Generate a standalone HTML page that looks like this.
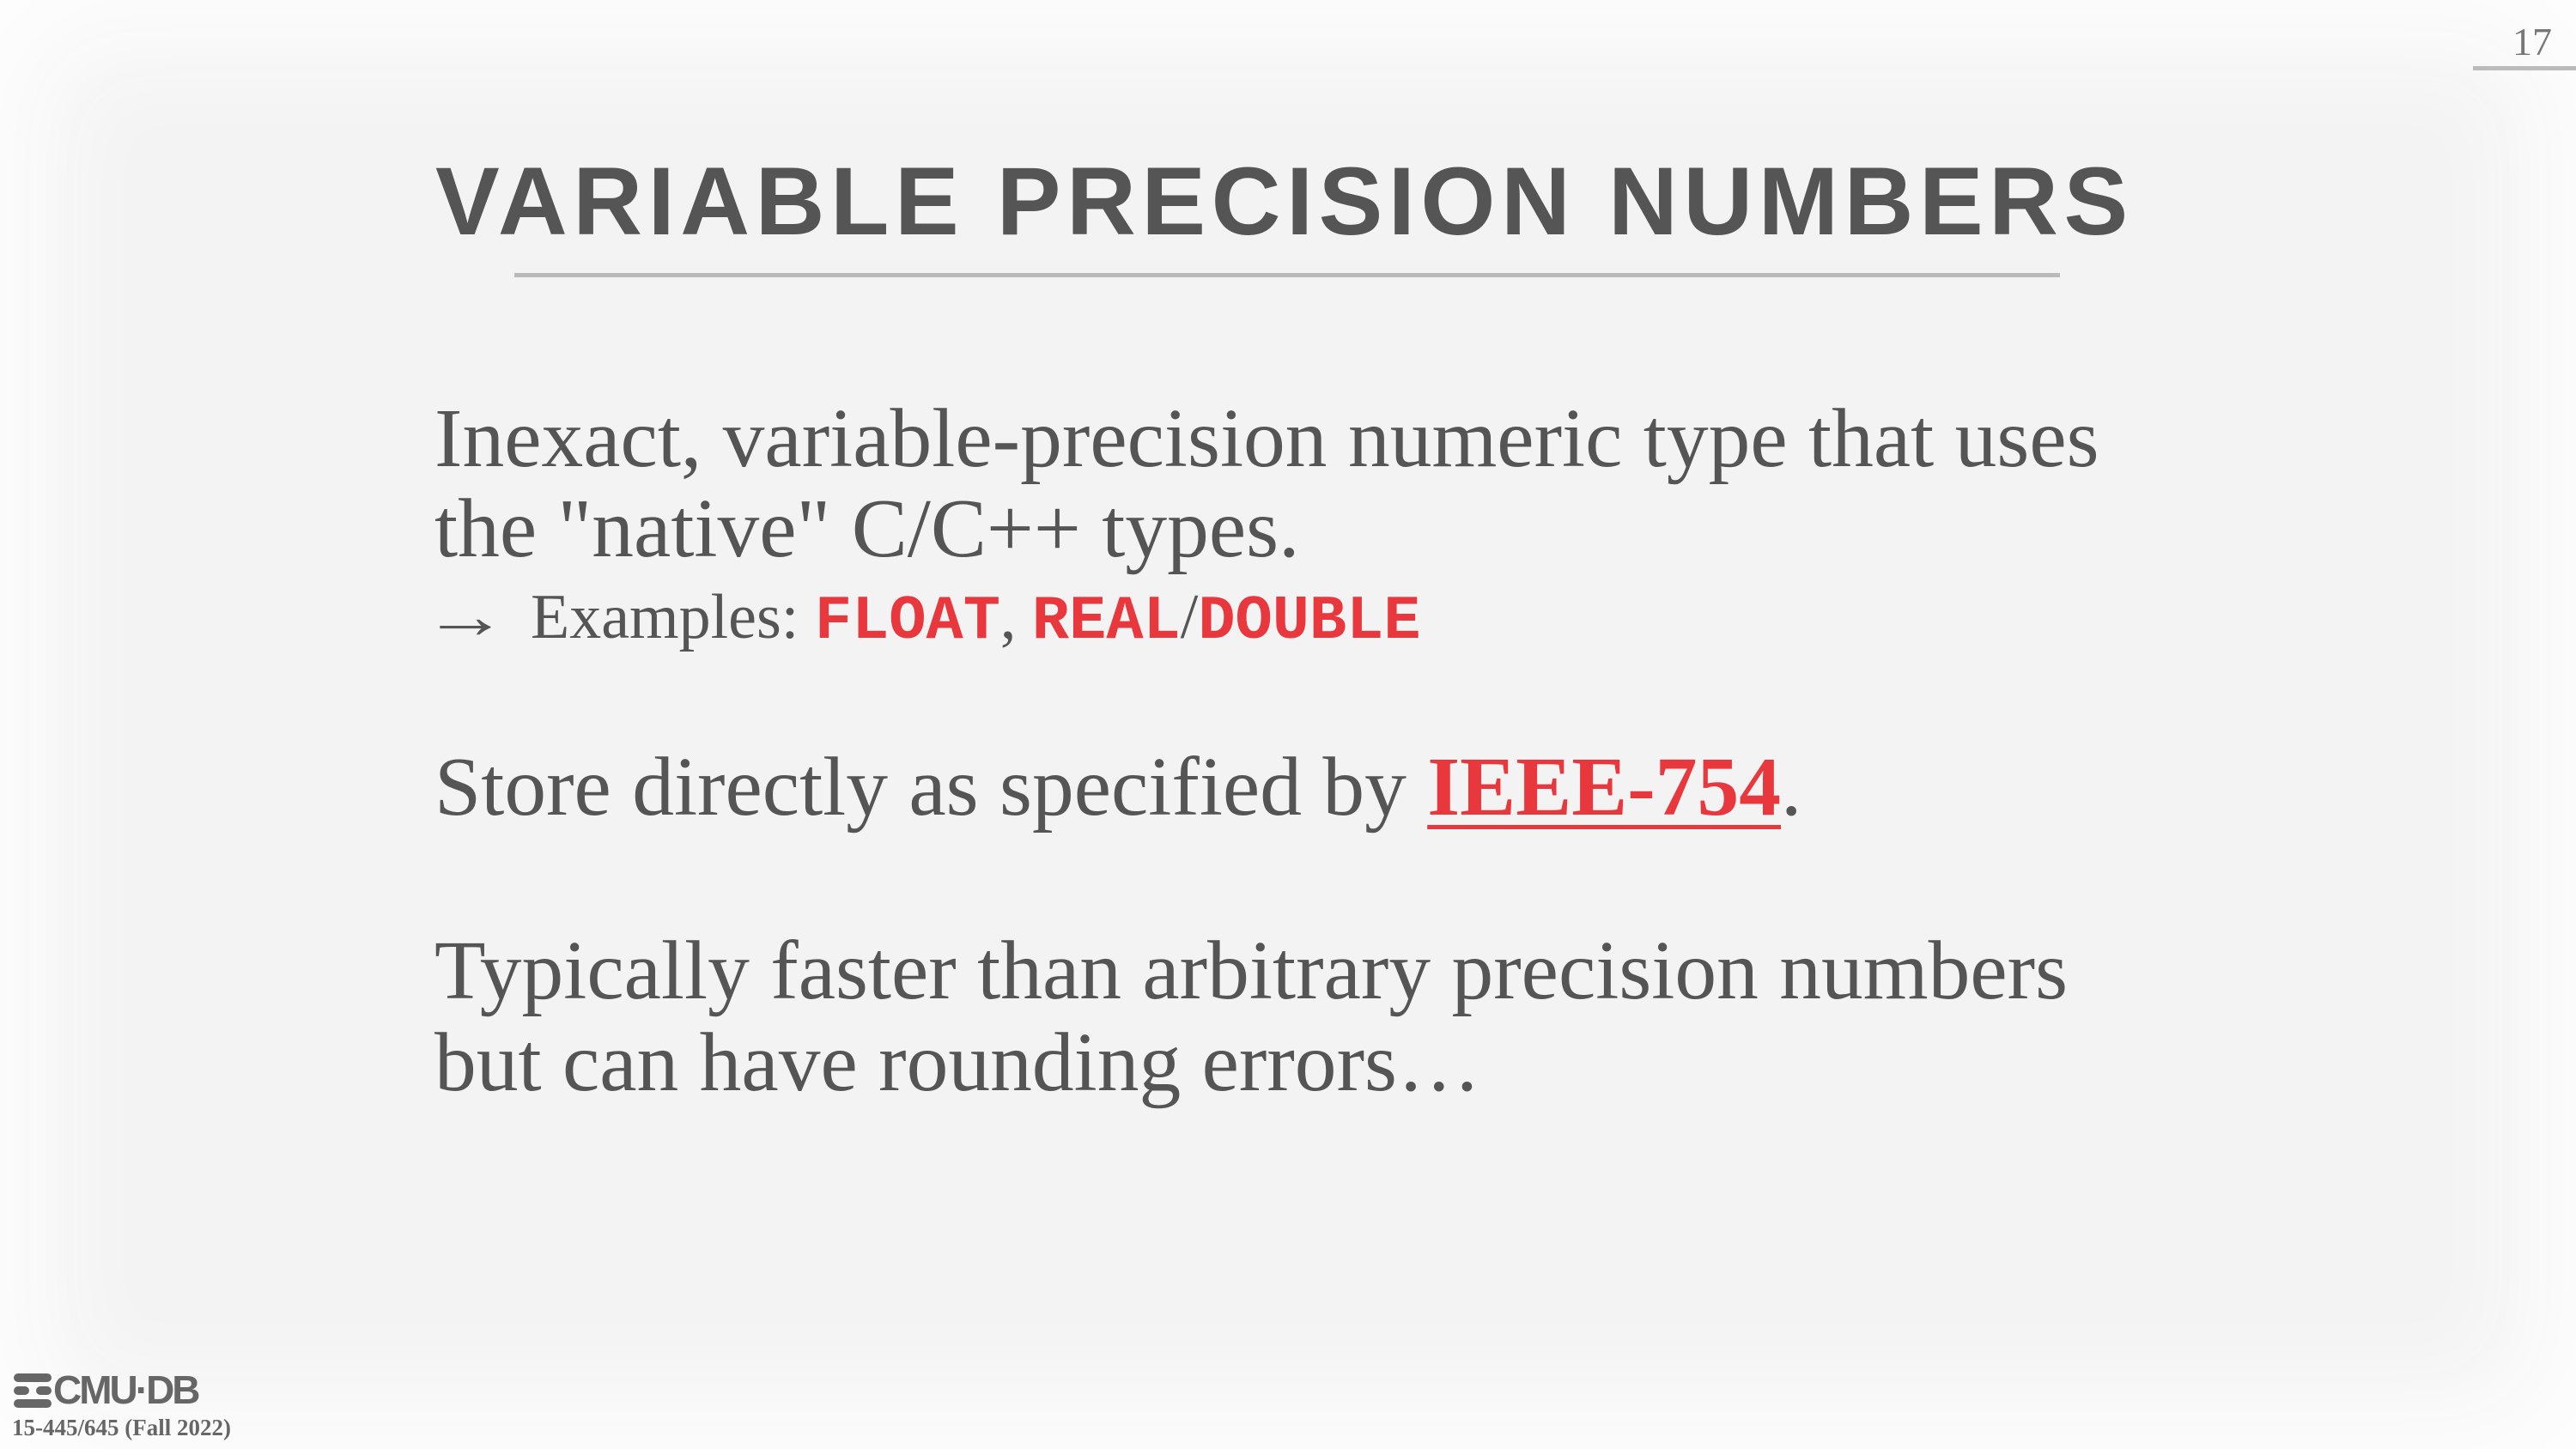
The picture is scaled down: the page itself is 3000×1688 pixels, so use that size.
<!DOCTYPE html>
<html><head><meta charset="utf-8"><style>
html,body{margin:0;padding:0}
body{width:3000px;height:1688px;position:relative;overflow:hidden;background:#f3f3f3;font-family:"Liberation Serif",serif;color:#555}
.vig{position:absolute;inset:0;box-shadow:inset 0 0 120px 60px #fdfdfd}
.l{position:absolute;white-space:nowrap;transform-origin:0 0}
.t{font-family:"Liberation Sans",sans-serif;font-weight:bold;font-size:112px;letter-spacing:6.5px;left:507px;top:170px;color:#555}
.b{font-size:98px;transform:scaleX(0.995)}
.m{font-family:"Liberation Mono",monospace;font-weight:bold;color:#e8383d;font-size:72px}
.r{color:#e8383d;font-weight:bold;text-decoration:underline;text-decoration-thickness:5px;text-underline-offset:12px}
</style></head><body>
<div class="vig"></div>
<div class="l" style="left:2926px;top:22px;font-size:46px;color:#777">17</div>
<div style="position:absolute;left:2880px;top:77px;width:120px;height:5px;background:#bbb"></div>
<div class="l t">VARIABLE PRECISION NUMBERS</div>
<div style="position:absolute;left:599px;top:318px;width:1800px;height:5px;background:#bbb"></div>
<div class="l b" style="left:506px;top:455px">Inexact, variable-precision numeric type that uses</div>
<div class="l b" style="left:506px;top:560px">the "native" C/C++ types.</div>
<div class="l" style="left:506px;top:677px;font-size:74px"><span style="display:inline-block;width:112px;font-size:74px;margin-left:-14px;padding-right:14px;transform:scaleX(1.35);transform-origin:0 50%">→</span>Examples: <span class="m">FLOAT</span>, <span class="m">REAL</span>/<span class="m">DOUBLE</span></div>
<div class="l b" style="left:506px;top:861px">Store directly as specified by <span class="r">IEEE-754</span>.</div>
<div class="l b" style="left:506px;top:1075px">Typically faster than arbitrary precision numbers</div>
<div class="l b" style="left:506px;top:1182px">but can have rounding errors…</div>
<svg style="position:absolute;left:14px;top:1598px" width="48" height="44" viewBox="0 0 48 44"><g fill="#666"><rect x="2" y="2" width="44" height="10" rx="5"/><rect x="2" y="17" width="18" height="10" rx="5"/><rect x="28" y="17" width="18" height="10" rx="5"/><rect x="2" y="32" width="44" height="10" rx="5"/></g></svg>
<div class="l" style="left:62px;top:1592px;font-family:'Liberation Sans',sans-serif;font-weight:bold;font-size:46px;color:#666;letter-spacing:-3px">CMU·DB</div>
<div class="l" style="left:14px;top:1648px;font-size:27px;font-weight:bold;color:#666">15-445/645 (Fall 2022)</div>
</body></html>
